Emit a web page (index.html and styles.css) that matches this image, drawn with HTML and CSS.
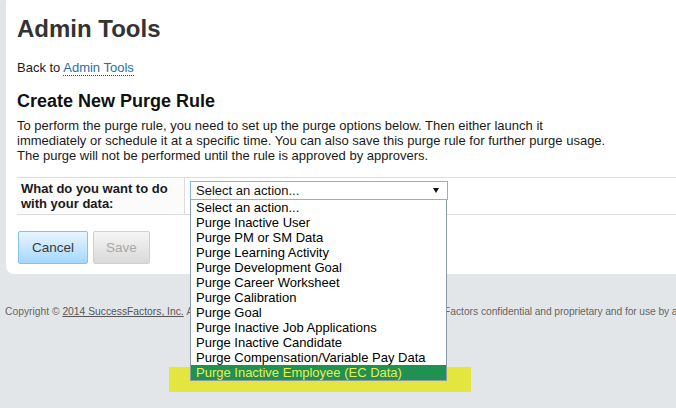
FILE: index.html
```html
<!DOCTYPE html>
<html>
<head>
<meta charset="utf-8">
<link rel="stylesheet" href="styles.css">
</head>
<body>
<div class="page">
  <div class="card">
    <h1 class="title">Admin Tools</h1>
    <p class="back">Back to <a class="link" href="#">Admin Tools</a></p>
    <h2 class="subtitle">Create New Purge Rule</h2>
    <p class="intro">To perform the purge rule, you need to set up the purge options below. Then either launch it<br>immediately or schedule it at a specific time. You can also save this purge rule for further purge usage.<br>The purge will not be performed until the rule is approved by approvers.</p>
    <div class="form-row">
      <div class="label-cell">What do you want to do<br>with your data:</div>
      <div class="field-cell">
        <div class="select">
          <span class="select-text">Select an action...</span>
          <span class="arrow"></span>
          <div class="highlight"></div>
          <ul class="options">
            <li>Select an action...</li>
            <li>Purge Inactive User</li>
            <li>Purge PM or SM Data</li>
            <li>Purge Learning Activity</li>
            <li>Purge Development Goal</li>
            <li>Purge Career Worksheet</li>
            <li>Purge Calibration</li>
            <li>Purge Goal</li>
            <li>Purge Inactive Job Applications</li>
            <li>Purge Inactive Candidate</li>
            <li>Purge Compensation/Variable Pay Data</li>
            <li class="selected">Purge Inactive Employee (EC Data)</li>
          </ul>
        </div>
      </div>
    </div>
    <div class="buttons">
      <button class="btn btn-cancel">Cancel</button>
      <button class="btn btn-save" disabled>Save</button>
    </div>
  </div>
  <p class="copyright">Copyright © <a class="copy-link" href="#">2014 SuccessFactors, Inc.</a> <span class="rights">All rights reserved. These online services are</span> SuccessFactors <span class="tail">confidential and proprietary and for use by authorized SuccessFactors customers only.</span></p>
</div>
</body>
</html>
```

FILE: styles.css
```css
html, body {
  margin: 0;
  padding: 0;
}
body {
  background: #e3e6e9;
  font-family: "Liberation Sans", Arial, sans-serif;
  color: #222;
  overflow: hidden;
}
.page {
  width: 676px;
  height: 408px;
  overflow: hidden;
}
.card {
  background: #fff;
  margin: -5px 0 0 6px;
  width: 780px;
  padding: 20px 0 10px 11px;
  border-radius: 8px 0 0 8px;
  box-sizing: border-box;
}
.title {
  margin: 0 0 17px;
  font-size: 24px;
  line-height: 28px;
  font-weight: bold;
  color: #333;
}
.back {
  margin: 0;
  font-size: 13px;
  line-height: 15px;
  color: #1a1a1a;
}
.link {
  color: #1f6fa8;
  text-decoration: none;
  border-bottom: 1px dotted #1f4f7a;
}
.subtitle {
  margin: 16px 0 6px;
  font-size: 18px;
  line-height: 21px;
  font-weight: bold;
  color: #111;
}
.intro {
  margin: 0 0 14px;
  font-size: 13px;
  line-height: 15px;
  color: #1a1a1a;
}
.form-row {
  display: flex;
  border-top: 1px solid #dcdcdc;
  border-bottom: 1px solid #dcdcdc;
}
.label-cell {
  width: 168px;
  box-sizing: border-box;
  padding: 3px 4px 3px 4px;
  font-size: 13px;
  line-height: 15px;
  font-weight: bold;
  color: #1a1a1a;
  border-right: 1px solid #dcdcdc;
  background: #fbfbfb;
}
.field-cell {
  flex: 1;
  padding: 3px 0 0 5px;
}
.select {
  position: relative;
  width: 258px;
  height: 19px;
  box-sizing: border-box;
  border: 1px solid #7eb4ea;
  background: #fff;
  display: flex;
  align-items: center;
  padding-left: 5px;
  font-size: 13px;
  color: #111;
}
.select-text {
  flex: 1;
  line-height: 15px;
}
.arrow {
  width: 0;
  height: 0;
  border-left: 3px solid transparent;
  border-right: 3px solid transparent;
  border-top: 5px solid #111;
  margin-right: 8px;
}
.options {
  position: absolute;
  z-index: 10;
  left: -1px;
  top: 18px;
  width: 257px;
  box-sizing: border-box;
  margin: 0;
  padding: 0;
  list-style: none;
  background: #fff;
  border: 1px solid #8a9aab;
  border-top: none;
}
.options li {
  height: 15px;
  line-height: 15px;
  padding-left: 5px;
  font-size: 13px;
  color: #000;
  white-space: nowrap;
}
.options li.selected {
  background: #1f9150;
  color: #ecec55;
}
.highlight {
  position: absolute;
  z-index: 5;
  left: -22px;
  top: 185px;
  width: 302px;
  height: 25px;
  background: #e5e53f;
}
.buttons {
  display: flex;
  gap: 5px;
  margin-top: 16px;
  padding-left: 1px;
}
.btn {
  height: 33px;
  box-sizing: border-box;
  font-family: "Liberation Sans", Arial, sans-serif;
  font-size: 13.5px;
  border-radius: 2px;
  padding: 0;
}
.btn-cancel {
  width: 70px;
  border: 1px solid #82c3f3;
  background: linear-gradient(#e8f5ff, #a6d7fd);
  color: #3a3a3a;
}
.btn-save {
  width: 57px;
  border: 1px solid #d3d1c2;
  background: linear-gradient(#f5f5f5, #d9d9d9);
  color: #a8a8a8;
}
.copyright {
  margin: 32px 0 0 5px;
  font-size: 10.3px;
  line-height: 12px;
  color: #666;
  white-space: nowrap;
}
.rights {
  word-spacing: 1.7px;
}
.tail {
  letter-spacing: -0.1px;
}
.copy-link {
  color: #555;
  text-decoration: underline;
}
```
